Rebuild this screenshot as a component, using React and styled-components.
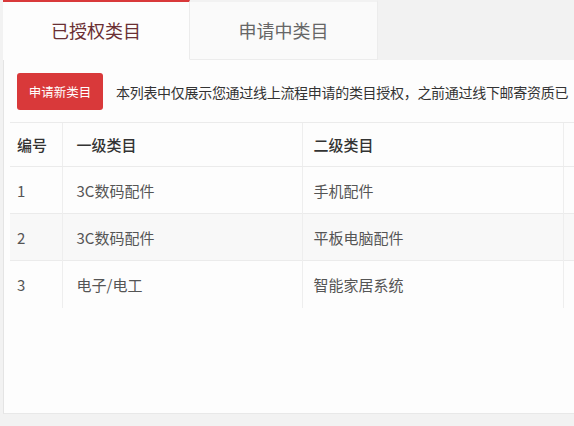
import React from 'react'
import styled, { createGlobalStyle } from 'styled-components'

const GlobalStyle = createGlobalStyle`
  html, body {
    margin: 0;
    padding: 0;
    background: #f2f2f2;
    overflow: hidden;
  }
  body {
    font-family: "Noto Sans CJK SC", "Liberation Sans", sans-serif;
    color: #333;
  }
`

const Page = styled.div`
  width: 574px;
  height: 426px;
  padding-left: 3px;
  box-sizing: border-box;
  display: flex;
  flex-direction: column;
  overflow: hidden;
`

const TabBar = styled.div`
  display: flex;
  height: 60px;
  flex-shrink: 0;
  background: #f2f2f2;
`

const Tab = styled.div`
  width: ${p => p.$width}px;
  display: flex;
  align-items: center;
  justify-content: center;
  box-sizing: border-box;
  font-size: 18px;
  color: ${p => (p.$active ? '#6a2f33' : '#666')};
  background: ${p => (p.$active ? '#fdfdfd' : '#fafafa')};
  border-top: 2px solid ${p => (p.$active ? '#d9393a' : '#f2f2f2')};
  border-right: 1px solid #ececec;
  border-bottom: 1px solid ${p => (p.$active ? '#fdfdfd' : '#ececec')};
  padding-bottom: 2px;
`

const Panel = styled.div`
  height: 353px;
  background: #fdfdfd;
  border-left: 1px solid #e4e4e4;
  border-bottom: 1px solid #e8e8e8;
  overflow: hidden;
`

const Toolbar = styled.div`
  display: flex;
  align-items: center;
  padding: 13px 0 0 13px;
  white-space: nowrap;
`

const ApplyButton = styled.button`
  width: 86px;
  height: 37px;
  border: none;
  border-radius: 3px;
  background: #d9393a;
  color: #fff;
  font-family: inherit;
  font-size: 12.5px;
  padding: 0;
  flex-shrink: 0;
`

const Notice = styled.span`
  margin-left: 13px;
  font-size: 14px;
  color: #333;
  letter-spacing: -0.3px;
`

const Table = styled.table`
  margin: 12px 0 0 6px;
  border-collapse: collapse;
  table-layout: fixed;
  width: 700px;
  font-size: 15px;
`

const Th = styled.th`
  box-sizing: border-box;
  width: ${p => p.$width}px;
  height: 44px;
  padding: 0 0 0 ${p => p.$pad}px;
  text-align: left;
  font-weight: 500;
  color: #333;
  border-top: 1px solid #ebebeb;
  border-bottom: 1px solid #ebebeb;
  border-left: 1px solid #eee;
  &:first-child { border-left: none; }
`

const Row = styled.tr`
  background: ${p => (p.$striped ? '#f8f8f8' : 'transparent')};
  border-bottom: ${p => (p.$last ? 'none' : '1px solid #ebebeb')};
`

const Td = styled.td`
  box-sizing: border-box;
  height: 47px;
  padding: 0 0 0 ${p => p.$pad}px;
  color: #555;
  border-left: 1px solid #eee;
  &:first-child { border-left: none; }
`

const columns = [
  { title: '编号', width: 52, pad: 7 },
  { title: '一级类目', width: 240, pad: 14 },
  { title: '二级类目', width: 261, pad: 11 },
  { title: '', width: 147, pad: 11 },
]

const rows = [
  ['1', '3C数码配件', '手机配件', ''],
  ['2', '3C数码配件', '平板电脑配件', ''],
  ['3', '电子/电工', '智能家居系统', ''],
]

export default function App() {
  return (
    <Page>
      <GlobalStyle />
      <TabBar>
        <Tab $active $width={187}>已授权类目</Tab>
        <Tab $width={188}>申请中类目</Tab>
      </TabBar>
      <Panel>
        <Toolbar>
          <ApplyButton>申请新类目</ApplyButton>
          <Notice>本列表中仅展示您通过线上流程申请的类目授权，之前通过线下邮寄资质已</Notice>
        </Toolbar>
        <Table>
          <thead>
            <tr>
              {columns.map((c, i) => (
                <Th key={i} $width={c.width} $pad={c.pad}>{c.title}</Th>
              ))}
            </tr>
          </thead>
          <tbody>
            {rows.map((r, idx) => (
              <Row key={idx} $striped={idx === 1} $last={idx === rows.length - 1}>
                {r.map((cell, i) => (
                  <Td key={i} $pad={columns[i].pad}>{cell}</Td>
                ))}
              </Row>
            ))}
          </tbody>
        </Table>
      </Panel>
    </Page>
  )
}
